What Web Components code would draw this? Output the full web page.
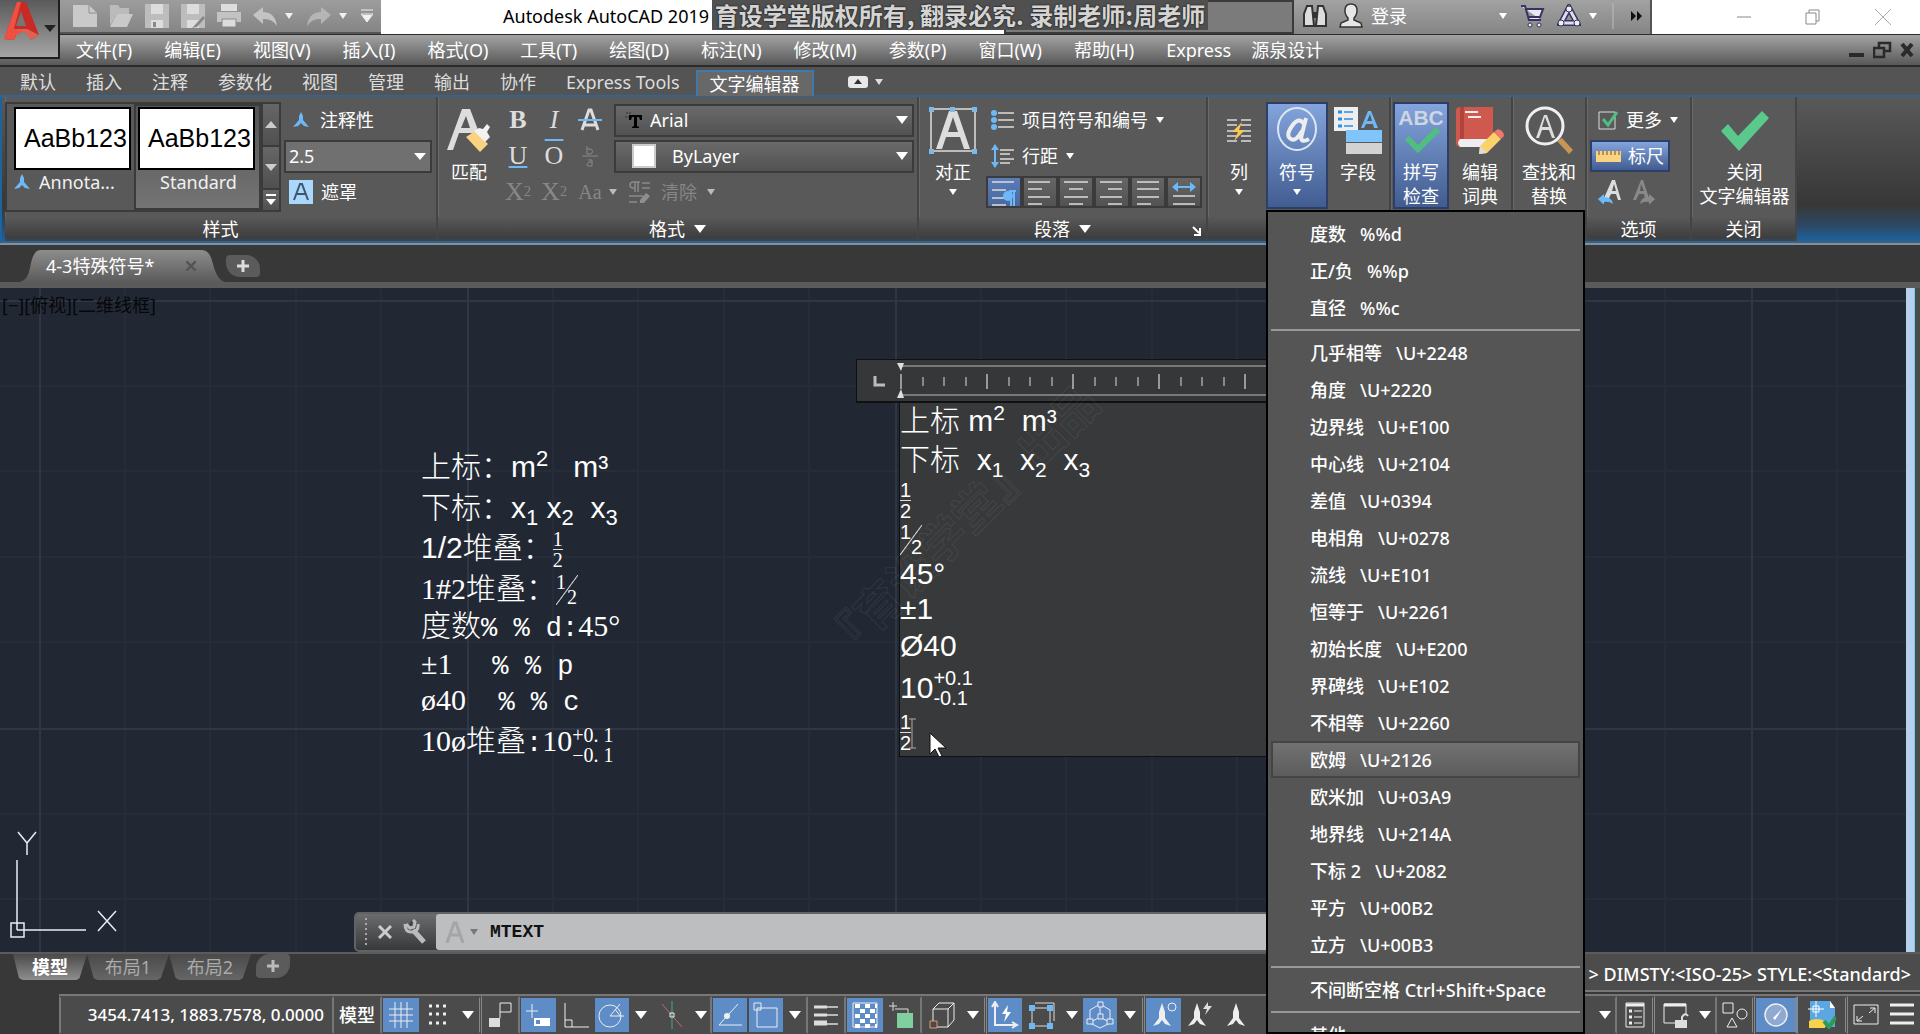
<!DOCTYPE html>
<html lang="zh-CN">
<head>
<meta charset="utf-8">
<title>Autodesk AutoCAD 2019</title>
<style>
  html, body { margin: 0; }
  body {
    position: relative;
    display: flex;
    flex-direction: column;
    min-height: 100vh;
    overflow: hidden;
    background: #383838;
    color: #fff;
    font: 18px/24px "Noto Sans", "Noto Sans CJK SC", sans-serif;
  }
</style>
</head>
<body>
<title-bar></title-bar>
<menu-bar></menu-bar>
<cad-ribbon></cad-ribbon>
<file-tabs></file-tabs>
<drawing-canvas></drawing-canvas>
<layout-tabs></layout-tabs>
<status-bar></status-bar>
<symbol-menu></symbol-menu>

<script>
const base = `
  :host, *, *::before, *::after { box-sizing: border-box; }
  button, select, input { margin: 0; padding: 0; border: 0; background: none; color: inherit; font: inherit; }
  button { display: flex; align-items: center; justify-content: center; flex: none; white-space: nowrap; }
  select { appearance: none; }
  svg { display: block; flex: none; }
`;

const svg = (w, h, body) => `<svg width="${w}" height="${h}" viewBox="0 0 ${w} ${h}" fill="none" aria-hidden="true">${body}</svg>`;
const caret = svg(8, 6, '<path d="M0 0h8l-4 6z" fill="currentColor"/>');
const bigCaret = svg(12, 8, '<path d="M0 0h12l-6 8z" fill="currentColor"/>');
const personA = (c) => svg(16, 16, `<path d="M8 0l2 4v4l6 7-5-1-3-3-3 3-5 1 6-7V4z" fill="${c}"/>`);

const lines = (list, c = '#ddd') => list.map(([x, y, w]) => `<path d="M${x} ${y}h${w}" stroke="${c}" stroke-width="1.5"/>`).join('');

class CadElement extends HTMLElement {
  constructor() {
    super();
    this.shadowDOM = this.attachShadow({mode: 'open'});
  }

  connectedCallback() {
    this.render();
  }

  show(style, markup) {
    this.shadowDOM.innerHTML = `<style>${base}${style}</style>${markup}`;
  }
}

class TitleBar extends CadElement {
  render() {
    const g = '#c9c9c9';
    const tools = [
      ['新建', svg(24, 24, `<path d="M0 1h16l8 8v14H0z" fill="${g}"/><path d="M16 1v8h8" stroke="#909090"/>`)],
      ['打开', svg(24, 24, `<path d="M1 22V1h8l2 3h9v6H8z" fill="#bbb"/><path d="M8 10h16l-6 13H1z" fill="${g}"/>`)],
      ['保存', svg(24, 24, `<path d="M0 0h24v24H0z" fill="#bdbdbd"/><path d="M6 0h12v10H6zM6 16h12v8H6z" fill="#ddd"/><path d="M8 18h3v5H8z" fill="#888"/>`)],
      ['另存为', svg(24, 24, `<path d="M0 0h24v24H0z" fill="#bdbdbd"/><path d="M6 0h12v10H6zM6 16h12v8H6z" fill="#ddd"/><path d="M22 12l-9 10-2 2 5-1 8-9z" fill="#888"/>`)],
      ['打印', svg(24, 24, `<path d="M4 0h16v7H4z" fill="#ddd"/><path d="M0 8h24v10H0z" fill="#c3c3c3"/><path d="M5 15h14v8H5z" fill="#ddd" stroke="#888"/>`)],
      ['放弃', svg(24, 20, `<path d="M0 9L10 1v5q12 0 14 14-5-8-14-7v5z" fill="#c3c3c3"/>`)],
      ['重做', svg(24, 20, `<path d="M24 9L14 1v5Q2 6 0 20q5-8 14-7v5z" fill="#b5b5b5"/>`)]
    ];
    const btn = ([name, icon]) => `<button aria-label="${name}">${icon}</button>`;
    this.show(`
      :host { position: relative; display: flex; height: 34px; background: #fff; color: #000; }
      .app { position: absolute; left: 0; top: 0; z-index: 2; width: 60px; height: 59px; padding: 2px 0 0 4px; border: solid #1e1e1e; border-width: 0 2px 2px 0; background: linear-gradient(#5a5a5a, #a5a5a5); align-items: flex-start; justify-content: flex-start; gap: 4px; color: #222; }
      .app svg + svg { margin-top: 23px; }
      .quick { display: flex; align-items: center; gap: 12px; width: 381px; padding-left: 73px; background: linear-gradient(#9d9d9d, #858585); color: #f0f0f0; border-bottom: 2px solid #555; }
      .quick .drop { width: 8px; margin: 0 2px 0 -4px; }
      h1 { flex: 1; margin: 0; padding: 4px 0 0 122px; font-size: 18px; font-weight: 400; line-height: 24px; }
      .stamp { position: absolute; left: 712px; top: 0; width: 496px; height: 30px; background: #505050; color: #d4d4d4; font: bold 24px/30px "Noto Sans CJK SC", sans-serif; white-space: nowrap; text-align: center; text-shadow: 0 0 2px #000; }
      .search { width: 290px; border: 2px solid #3a3a3a; background: #7b7b7b; }
      .info { display: flex; align-items: center; width: 358px; padding: 0 9px 2px; border-right: 2px solid #555; background: linear-gradient(#a2a2a2, #858585); color: #fff; }
      .info button { gap: 8px; margin-right: 12px; }
      .window { display: flex; align-items: center; justify-content: space-between; width: 268px; padding: 0 29px 0 85px; }
    `, `
      <button class="app" aria-label="应用程序菜单">
        ${svg(36, 40, '<path d="M0 37L13 0h9l13 33-8 5-4-11-9 2-4 9z" fill="#c82a25"/><path d="M0 37L13 0h4L10 27l13 1-11 5-2 5z" fill="#ee5042"/><path d="M17 9l-5 15h10z" fill="#757575"/><path d="M10 27l13 0 12 6-8 5-6-8z" fill="#dd6253"/>')}
        ${svg(12, 8, '<path d="M0 0h12l-6 7z" fill="#222"/>')}
      </button>
      <div class="quick">
        ${tools.slice(0, 6).map(btn).join('')}
        <button class="drop" aria-label="放弃列表">${caret}</button>
        ${btn(tools[6])}
        <button class="drop" aria-label="重做列表">${caret}</button>
        <button aria-label="自定义">${svg(12, 14, '<path d="M0 1h12M0 5h12l-6 8z" stroke="#f0f0f0"/><path d="M1 6h10l-5 7z" fill="#f0f0f0"/>')}</button>
      </div>
      <h1>Autodesk AutoCAD 2019</h1>
      <div class="search"></div>
      <div class="info">
        <button aria-label="搜索">${svg(24, 24, '<path d="M4 2h5l2 20H1V10zM15 2h5l3 8v12H13z" fill="#ddd" stroke="#333" stroke-width="2"/><path d="M10 8h4v6h-4z" fill="#333"/>')}</button>
        <button>${svg(24, 26, '<path d="M12 1c8 0 7 10 3 14v2l7 3 1 4H1l1-4 7-3v-2C5 11 4 1 12 1z" fill="#e6e6e6" stroke="#333" stroke-width="1.5"/>')}登录</button>
        <button style="margin-left:80px" aria-label="登录菜单">${caret}</button>
        <button aria-label="应用商店">${svg(26, 26, '<path d="M2 3h4l4 14h12M7 6h17l-3 8H9" fill="#e8e8f5" stroke="#34345f" stroke-width="2"/><circle cx="11" cy="22" r="2" fill="#eee" stroke="#34345f"/><circle cx="20" cy="22" r="2" fill="#eee" stroke="#34345f"/>')}</button>
        <button aria-label="A360">${svg(24, 24, '<path d="M12 4L4 19h16z" stroke="#34345f" stroke-width="6"/><path d="M12 4L4 19h16z" stroke="#dde" stroke-width="3"/><circle cx="12" cy="5" r="3" fill="#eee" stroke="#34345f"/><circle cx="4" cy="19" r="3" fill="#eee" stroke="#34345f"/><circle cx="20" cy="19" r="3" fill="#eee" stroke="#34345f"/>')}${caret}</button>
        <button aria-label="更多">${svg(36, 28, '<path d="M4 1v26" stroke="#bbb"/><path d="M22 9l5 5-5 5zM28 9l5 5-5 5z" fill="#111"/>')}</button>
      </div>
      <div class="window">
        <button aria-label="最小化">${svg(14, 14, '<path d="M0 7h14" stroke="#888"/>')}</button>
        <button aria-label="还原">${svg(16, 16, '<path d="M1 4h10v11H1zM4 4V1h10v11h-3" stroke="#888"/>')}</button>
        <button aria-label="关闭">${svg(16, 16, '<path d="M0 0l16 16M16 0L0 16" stroke="#aaa"/>')}</button>
      </div>
      <div class="stamp">育设学堂版权所有, 翻录必究. 录制老师:周老师</div>
    `);
  }
}
customElements.define('title-bar', TitleBar);

class MenuBar extends CadElement {
  render() {
    const items = ['文件(F)', '编辑(E)', '视图(V)', '插入(I)', '格式(O)', '工具(T)', '绘图(D)', '标注(N)', '修改(M)', '参数(P)', '窗口(W)', '帮助(H)', 'Express', '源泉设计'];
    this.show(`
      :host { display: flex; align-items: center; justify-content: space-between; height: 33px; border: solid #2b2b2b; border-width: 1px 0 2px; padding: 0 6px 0 76px; background: linear-gradient(#a3a3a3, #585858); }
      nav, .doc { display: flex; gap: 32px; }
      nav button:last-child { margin-left: -12px; }
      .doc { gap: 8px; }
    `, `
      <nav>${items.map(i => `<button>${i}</button>`).join('')}</nav>
      <div class="doc">
        <button aria-label="最小化图形">${svg(16, 18, '<path d="M0 12h15v4H0z" fill="#2a2a2a"/>')}</button>
        <button aria-label="还原图形">${svg(19, 18, '<path d="M1 7h10v9H1zM6 6V2h11v8h-5" stroke="#2a2a2a" stroke-width="2.5"/>')}</button>
        <button aria-label="关闭图形">${svg(14, 16, '<path d="M2 2l10 12M12 2L2 14" stroke="#2a2a2a" stroke-width="4"/>')}</button>
      </div>
    `);
  }
}
customElements.define('menu-bar', MenuBar);

class RibbonPanel extends CadElement {
  render() {
    const drop = this.hasAttribute('drop') ? bigCaret : '';
    const launcher = this.hasAttribute('launcher')
      ? `<button class="launch" aria-label="段落对话框">${svg(9, 10, '<path d="M1 1l6 6M8 2v7H2" stroke="#fff" stroke-width="2"/>')}</button>` : '';
    this.show(`
      :host { display: flex; flex-direction: column; flex: none; border: solid #444; border-width: 0 2px 0 0; box-shadow: inset 1px 0 #6a6a6a; background: #595959; }
      .body { display: flex; height: 120px; padding: 5px 0 0 4px; }
      .foot { position: relative; display: flex; align-items: center; justify-content: center; gap: 9px; height: 24px; background: linear-gradient(#595959, #3e3e3e 85%, #2d4a68); }
      .launch { position: absolute; right: 5px; top: 9px; }
    `, `<div class="body"><slot></slot></div><div class="foot">${this.getAttribute('caption') || ''}${drop}${launcher}</div>`);
  }
}
customElements.define('ribbon-panel', RibbonPanel);

class CadRibbon extends CadElement {
  render() {
    const tabs = ['默认', '插入', '注释', '参数化', '视图', '管理', '输出', '协作', 'Express Tools'];
    const align = [
      lines([[0, 4, 22], [0, 12, 14], [0, 20, 14], [0, 27, 14]]) + '<path d="M17 13h7M19 13v15M22 13v15" stroke="#6db9f7" stroke-width="2"/><circle cx="16" cy="18" r="5" fill="#6db9f7"/>',
      lines([[0, 5, 22], [0, 12, 14], [0, 20, 22], [0, 27, 14]]),
      lines([[0, 5, 24], [5, 12, 14], [0, 20, 24], [5, 27, 14]]),
      lines([[0, 5, 22], [8, 12, 14], [0, 20, 22], [8, 27, 14]]),
      lines([[1, 5, 22], [1, 12, 22], [1, 20, 22], [1, 27, 14]]),
      '<path d="M0 10l6-5v4h12V5l6 5-6 5v-4H6v4z" fill="#6db9f7"/>' + lines([[1, 19, 22], [1, 27, 22]])
    ];
    this.show(`
      :host { display: block; border-bottom: 2px solid #7d91a5; background: #545454; }
      .tabs { display: flex; align-items: flex-start; height: 30px; padding: 3px 0 0 5px; border-bottom: 2px solid #35648f; color: #ddd; }
      .tabs button { padding: 0 15px; line-height: 25px; }
      .tabs .on { height: 26px; margin-left: 1px; padding: 0 12px; border: 2px solid #4178aa; border-bottom: 0; background: #686868; color: #fff; line-height: 20px; }
      .tabs .min { gap: 7px; height: 24px; padding: 0 34px; }
      .panels { display: flex; padding-left: 3px; border-bottom: 2px solid #3f5f7d; border-left: 2px solid #1d639c; background: linear-gradient(#595959, #373737 75%, #2d4a68 90%, #1c639f); }
      .gallery { display: flex; width: 276px; height: 110px; margin-left: -4px; border: 2px solid #3b3b3b; }
      .style { display: flex; flex-direction: column; align-items: stretch; justify-content: flex-start; width: 127px; padding: 3px 2px 0 7px; line-height: 24px; color: #f0f0f0; }
      .style b { display: block; width: 117px; height: 63px; padding-left: 8px; border: 2px solid #000; background: #fff; color: #000; font: 25px/58px "Liberation Sans", sans-serif; text-align: left; }
      .style span { display: flex; align-items: center; gap: 9px; }
      .style.on { border: 2px solid #3b3b3b; padding: 1px 0 0 2px; background: linear-gradient(#555, #747474); }
      .style.on span { justify-content: center; }
      .scroll { width: 20px; border-left: 2px solid #3b3b3b; }
      .scroll button { width: 100%; height: 43px; border-bottom: 2px solid #3b3b3b; background: linear-gradient(#666, #505050); }
      .scroll button:last-child { height: 20px; border: 0; }
      .opts { width: 148px; margin-left: 3px; }
      .row { display: flex; align-items: center; height: 36px; white-space: nowrap; }
      .row button { height: 32px; }
      .cell { width: 36px; font: 26px/32px "Liberation Serif", serif; color: #ddd; }
      .dim { color: #878787; }
      sup, sub { font-size: 14px; line-height: 0; }
      .opts button { gap: 8px; padding-left: 5px; }
      .opts .note { gap: 11px; padding-left: 9px; }
      .combo { position: relative; display: flex; align-items: center; gap: 10px; width: 100%; height: 33px; padding: 0 4px 0 3px; border: 2px solid #3b3b3b; background: #707070; }
      .combo select { flex: 1; min-width: 0; height: 28px; }
      .combo svg:last-child { pointer-events: none; }
      .font { flex: none; width: 300px; margin-left: 6px; padding-left: 8px; gap: 8px; background: linear-gradient(#6a6a6a, #525252); }
      .swatch { width: 24px; height: 24px; margin: 0 8px; border: 2px solid #ccc; background: #fff; }
      .big { flex-direction: column; justify-content: flex-start; width: 54px; height: 107px; padding-top: 4px; line-height: 24px; }
      .big > svg:first-child { margin-bottom: 6px; }
      .big svg + svg, .big span + svg { margin-top: 5px; }
      .on2 { border: 2px solid #2d3f66; padding-top: 2px; background: linear-gradient(#83a4dc, #415c90); }
      .gap8 { gap: 8px; }
      .al { width: 36px; border: 2px solid #3b3b3b; background: linear-gradient(#666, #525252); }
      .al.on2 { background: linear-gradient(#5a7cb8, #4a689e); }
    `, `
      <div class="tabs">
        ${tabs.map(t => `<button>${t}</button>`).join('')}
        <button class="on">文字编辑器</button>
        <button class="min" aria-label="最小化功能区">${svg(20, 12, '<rect width="20" height="12" rx="3" fill="#e8e8e8"/><path d="M6 8h8l-4-5z" fill="#333"/>')}${caret}</button>
      </div>
      <div class="panels">
        <ribbon-panel caption="样式" style="width:433px">
          <div class="gallery">
            <button class="style"><b>AaBb123</b><span>${personA('#6db9f7')}Annota...</span></button>
            <button class="style on"><b>AaBb123</b><span>Standard</span></button>
            <div class="scroll">
              <button aria-label="上一行">${svg(12, 8, '<path d="M0 7h12L6 0z" fill="#ccc"/>')}</button>
              <button aria-label="下一行">${svg(12, 8, '<path d="M0 0h12L6 7z" fill="#ccc"/>')}</button>
              <button aria-label="展开">${svg(12, 12, '<path d="M1 1h10" stroke="#fff" stroke-width="2"/><path d="M1 5h10l-5 6z" fill="#fff"/>')}</button>
            </div>
          </div>
          <div class="opts">
            <div class="row"><button class="note">${personA('#6db9f7')}注释性</button></div>
            <div class="row"><div class="combo"><select aria-label="文字高度"><option>2.5</option></select>${svg(12, 7, '<path d="M0 0h12l-6 7z" fill="#fff"/>')}</div></div>
            <div class="row"><button>${svg(24, 24, '<path d="M0 0h24v24H0z" fill="#a9d7fd"/><path d="M5 20l6-16h2l6 16M7 14h10" stroke="#405468" stroke-width="2"/>')}遮罩</button></div>
          </div>
        </ribbon-panel>

        <ribbon-panel caption="格式" drop style="width:481px">
          <button class="big">${svg(48, 48, '<path d="M2 44L17 3h8l13 34h-7l-4-10H14L8 44zM16 22h9L21 10z" fill="#ddd"/><path d="M21 31l9-6 13 13-8 8z" fill="#fbd281"/><path d="M29 25l5-3 4 1 4-5 3 3-3 5 3 5-5 5z" fill="#f2f2f2"/>')}匹配</button>
          <div style="margin-left:4px">
            <div class="row">
              <button class="cell"><strong>B</strong></button><button class="cell"><em>I</em></button>
              <button class="cell" aria-label="删除线">${svg(24, 24, '<path d="M4 22L11 2h2l7 20M7 17h10" stroke="#ddd" stroke-width="3"/><path d="M0 12h24" stroke="#6db9f7" stroke-width="2"/>')}</button>
              <div class="combo font">${svg(18, 20, '<path d="M2 3h5M1 7h5" stroke="#333" stroke-dasharray="2 1"/><path d="M5 5h13v5h-2l-1-3h-2v9l2 1v1H8v-1l2-1V7H8l-1 3H5z" fill="#000"/>')}<select aria-label="字体"><option>Arial</option></select>${bigCaret}</div>
            </div>
            <div class="row">
              <button class="cell" style="text-decoration:underline;text-decoration-color:#6db9f7">U</button>
              <button class="cell" style="text-decoration:overline;text-decoration-color:#6db9f7">O</button>
              <button class="cell dim" aria-label="堆叠">${svg(16, 22, '<path d="M5 1v8h3a2 2 0 0 0 0-5H5M10 21v-6H6M10 17H7q-4 4 0 4h3" stroke="#8a8a8a"/><path d="M0 11h16" stroke="#8a8a8a"/>')}</button>
              <div class="combo font"><i class="swatch"></i><select aria-label="颜色"><option>ByLayer</option></select>${bigCaret}</div>
            </div>
            <div class="row dim">
              <button class="cell dim">X<sup>2</sup></button><button class="cell dim">X<sub>2</sub></button>
              <button class="cell dim" style="font-size:20px">Aa</button><span style="color:#bbb;padding:0 12px 0 1px">${caret}</span>
              <button style="gap:10px;color:#868686">${svg(22, 24, '<path d="M6 2v10M9 2v10M11 2H4a3 3 0 0 0 0 6h2M13 3h8M13 8h8M0 16h14M0 22h8" stroke="#8a8a8a" stroke-width="1.5"/><path d="M11 20l6-7 4 3-6 7h-4z" fill="#8f8f8f"/>')}清除<span style="color:#bbb">${caret}</span></button>
            </div>
          </div>
        </ribbon-panel>

        <ribbon-panel caption="段落" drop launcher style="width:289px">
          <button class="big" style="width:60px">${svg(48, 48, '<path d="M2 3h44v42H2z" stroke="#ddd" stroke-width="1.5"/><path d="M7 43L20 5h8l13 38h-6l-4-12H17l-4 12zM19 26h10L24 11z" fill="#ddd"/><path d="M0 1h5v5H0zM21 1h5v5h-5zM43 1h5v5h-5zM0 43h5v5H0zM43 43h5v5h-5z" fill="#7fb9e6"/>')}对正${caret}</button>
          <div>
            <div class="row" style="padding-left:8px"><button class="gap8">${svg(23, 20, '<circle cx="3" cy="3" r="3" fill="#6db9f7"/><circle cx="3" cy="10" r="3" fill="#6db9f7"/><circle cx="3" cy="17" r="3" fill="#6db9f7"/>' + lines([[7, 3, 16], [7, 10, 16], [7, 17, 16]]))}项目符号和编号${caret}</button></div>
            <div class="row" style="padding-left:8px"><button class="gap8">${svg(23, 24, '<path d="M4 2v20" stroke="#6db9f7" stroke-width="2"/><path d="M0 6l4-6 4 6zM0 18l4 6 4-6z" fill="#6db9f7"/>' + lines([[9, 6, 14], [9, 10, 10], [9, 15, 14], [9, 19, 10]]))}行距${caret}</button></div>
            <div class="row" style="padding-left:3px">${align.map((a, i) => `<button class="al ${i ? '' : 'on2'}" aria-label="对齐 ${i + 1}">${svg(24, 30, a)}</button>`).join('')}</div>
          </div>
        </ribbon-panel>

        <ribbon-panel style="width:183px">
          <button class="big">${svg(24, 48, lines([[0, 14, 10], [0, 19, 10], [0, 25, 10], [0, 30, 10], [0, 35, 10], [14, 14, 10], [14, 19, 10], [14, 25, 10], [14, 30, 10], [14, 35, 10]]) + '<path d="M15 16L5 26h6l-4 9 11-11h-6z" fill="#fbc658"/>')}列${caret}</button>
          <button class="big on2" style="width:62px">${svg(48, 48, '<ellipse cx="24" cy="23" rx="19" ry="21" stroke="#dde6f5" stroke-width="2"/><path d="M33 12l-5 20q1 5 8 1" stroke="#eee" stroke-width="4"/><path d="M31 18q-5-8-12 2t-1 13q5 3 11-8" stroke="#eee" stroke-width="4"/>')}符号${caret}</button>
          <button class="big" style="width:60px">${svg(48, 48, '<path d="M0 1h24v24H0z" fill="#eee"/><path d="M4 6h4M4 13h4M4 20h4" stroke="#2b8fe0" stroke-width="3"/><path d="M10 6h9M10 13h9M10 20h9" stroke="#2b8fe0" stroke-width="1.5"/><path d="M27 22l7-17h3l7 17h-4l-1-4h-7l-2 4zM33 15h5l-2-7z" fill="#6db9f7"/><path d="M12 24h36v12H12z" fill="#7fc4fb"/><path d="M12 37h36v11H12z" fill="#d2d2d2"/>')}字段</button>
        </ribbon-panel>

        <ribbon-panel style="width:122px">
          <button class="big on2" style="margin-left:-2px;width:56px">${svg(52, 48, '<text x="26" y="19" fill="#cfd5e2" text-anchor="middle" font-family="Liberation Sans" font-weight="700" font-size="21">ABC</text><path d="M12 32l11 11 20-20" stroke="#50bd81" stroke-width="6"/>')}拼写<span>检查</span></button>
          <button class="big" style="margin-left:4px">${svg(48, 48, '<path d="M4 1h33v36H4q-4 5 0 5-4-2-4-5V5q0-4 4-4z" fill="#cf594f"/><path d="M6 1v32" stroke="#b3443c" stroke-width="4"/><path d="M4 33h33v8H4q-4-4 0-8z" fill="#eee"/><path d="M9 6h13M12 11h13" stroke="#eee" stroke-width="2"/><path d="M24 40l14-14 7 7-14 14-8 1z" fill="#fbd26a"/><path d="M38 26l4-3q6 2 6 7l-3 3z" fill="#f0796b"/><path d="M24 40l7 7-8 1z" fill="#ddd"/>')}编辑<span>词典</span></button>
        </ribbon-panel>

        <ribbon-panel style="width:74px">
          <button class="big" style="width:64px">${svg(48, 48, '<path d="M32 35l5-3 11 12-4 4z" fill="#c89556"/><circle cx="20" cy="20" r="18" stroke="#f0f0f0" stroke-width="3"/><path d="M11 32l8-23h3l8 23h-3l-3-8h-7l-3 8zM17 21h7l-4-10z" fill="#ddd"/>')}查找和<span>替换</span></button>
        </ribbon-panel>

        <ribbon-panel caption="选项" style="width:105px">
          <div style="margin-left:-1px">
            <div class="row" style="padding-left:8px"><button class="gap8">${svg(20, 20, '<path d="M1 2h16v17H1z" stroke="#ddd"/><path d="M5 9l5 6 9-13" stroke="#50bd81" stroke-width="3"/>')}更多${caret}</button></div>
            <div class="row"><button class="on2" style="gap:7px;width:80px;padding:0">${svg(25, 12, '<path d="M0 1h25v11H0z" fill="#fbd281"/><path d="M3 1v4M7 1v4M11 1v4M15 1v4M19 1v4M23 1v4" stroke="#665532"/>')}标尺</button></div>
            <div class="row" style="padding-left:8px;gap:10px">
              <button aria-label="放弃">${svg(24, 24, '<path d="M6 18L14 0h3l6 20h-3l-2-6h-5l-3 6zM14 11h4l-2-7z" fill="#ddd"/><path d="M0 19l6-5v3q8 0 9 7-4-3-9-2v3z" fill="#6db9f7"/>')}</button>
              <button aria-label="重做">${svg(24, 24, '<path d="M1 20L9 0h2l6 18-4 2-1-6H7l-3 6zM8 11h4L9 4z" fill="#898989"/><path d="M23 19l-6-5v3q-8 0-9 7 4-3 9-2v3z" fill="#898989"/>')}</button>
            </div>
          </div>
        </ribbon-panel>

        <ribbon-panel caption="关闭" style="width:105px">
          <button class="big" style="width:95px;margin-left:1px">${svg(48, 48, '<path d="M0 25l7-7 10 12L41 5l7 7-30 33z" fill="#5bc98b"/>')}关闭<span>文字编辑器</span></button>
        </ribbon-panel>
      </div>
    `);
  }
}
customElements.define('cad-ribbon', CadRibbon);

class FileTabs extends CadElement {
  render() {
    this.show(`
      :host { display: flex; align-items: flex-end; height: 43px; padding-left: 20px; border-bottom: 6px solid #5b5b5b; background: #383838; }
      .tab { justify-content: flex-start; gap: 32px; width: 205px; height: 32px; padding-left: 26px; background: linear-gradient(#8d8d8d, #5b5b5b); clip-path: path("M0 32Q8 30 10 18Q13 0 20 0H182Q190 0 193 14Q197 30 205 32Z"); }
      .add { width: 34px; height: 22px; margin: 0 0 5px 1px; border-radius: 4px 14px 4px 14px; background: #5b5b5b; }
    `, `
      <button class="tab">4-3特殊符号*${svg(10, 10, '<path d="M0 0l10 10M10 0L0 10" stroke="#555" stroke-width="2.5"/>')}</button>
      <button class="add" aria-label="新图形">${svg(12, 12, '<path d="M6 0v12M0 6h12" stroke="#ddd" stroke-width="3"/>')}</button>
    `);
  }
}
customElements.define('file-tabs', FileTabs);

class CommandLine extends CadElement {
  render() {
    this.show(`
      :host { display: flex; height: 40px; border: 2px solid #606265; border-radius: 5px 0 0 5px; background: linear-gradient(#6a6c6e, #38393b); }
      .grip { display: flex; align-items: center; gap: 11px; width: 80px; padding-left: 9px; }
      .field { display: flex; align-items: center; flex: 1; gap: 6px; padding-left: 10px; border-radius: 3px 0 0 3px; background: #bdbec0; color: #777; }
      input { flex: 1; margin-left: 6px; color: #111; font: bold 18px/24px "Liberation Mono", monospace; outline: 0; }
    `, `
      <div class="grip">
        ${svg(2, 28, '<path d="M1 0v28" stroke="#aaa" stroke-width="2" stroke-dasharray="2 3"/>')}
        <button aria-label="关闭命令行">${svg(14, 14, '<path d="M1 1l12 12M13 1L1 13" stroke="#ccc" stroke-width="3"/>')}</button>
        <button aria-label="自定义命令行">${svg(24, 26, '<path d="M10 11l11 12" stroke="#bbb" stroke-width="5"/><path d="M9 2L7 7l5 2 3-4" stroke="#3d3e40" stroke-width="2"/><path d="M2 5q0 9 7 8 7-1 6-8M3 5l4 4 4-1 1-5-2-2" stroke="#bbb" stroke-width="3"/>')}</button>
      </div>
      <div class="field">
        ${svg(18, 22, '<path d="M1 22L8 2h2l7 20M4 14h10" stroke="#a4a5a7" stroke-width="3"/>')}${caret}
        <input aria-label="命令" value="MTEXT">
      </div>
    `);
  }
}
customElements.define('command-line', CommandLine);

// fraction styles shared by the notes and the text editor
const stacks = `
  .frac, .tol { display: inline-flex; flex-direction: column; font-size: 20px; line-height: 20px; vertical-align: middle; }
  .frac span + span { border-top: 1px solid #ddd; }
  .diag { display: inline-grid; grid-template: 15px 15px / 11px 11px; font-size: 20px; line-height: 15px; vertical-align: middle; background: linear-gradient(to bottom right, transparent calc(50% - 1px), #ddd, transparent calc(50% + 1px)); }
  .diag span + span { grid-area: 2 / 2; }
`;

class TextEditor extends CadElement {
  render() {
    const ticks = Array.from({length: 18}, (_, i) => i % 4
      ? `<path d="M${Math.round(44 + i * 21.5)} 17v9" stroke="#888" stroke-width="2"/>`
      : `<path d="M${44 + i * 21.5} 14v15" stroke="#999" stroke-width="2"/>`).join('');
    this.show(`
      :host { display: block; }
      ${stacks}
      .ruler { width: 411px; border: 1px solid #111; border-width: 1px 0 2px 1px; background: #363738; }
      .page { position: relative; display: grid; grid-template-rows: 34px 42px 42px 38px 30px 40px 34px 50px 38px 5px; align-items: center; margin-left: 43px; border: solid #111; border-width: 0 0 1px 1px; background: #38393a; font: 30px/30px "Liberation Sans", sans-serif; white-space: pre; }
      .cn { font-family: "Noto Sans CJK SC", sans-serif; font-weight: 300; }
      .row1 { align-self: start; }
      sup, sub { font-size: 21px; line-height: 0; }
      .flex { display: flex; }
      .caret { position: absolute; left: 9px; bottom: 7px; }
    `, `
      <div class="ruler">${svg(410, 41, `<path d="M18 16v9h10" stroke="#bbb" stroke-width="3"/><path d="M44 6h366M44 35h366" stroke="#bbb"/><path d="M40 3h7l-3 8zM40 38h7l-3-9z" fill="#ddd"/>${ticks}`)}</div>
      <div class="page">
        <div class="row1"><span class="cn">上标</span> m<sup>2</sup>  m³</div>
        <div><span class="cn">下标</span>  x<sub>1</sub>  x<sub>2</sub>  x<sub>3</sub></div>
        <div class="flex"><span class="frac"><span>1</span><span>2</span></span></div>
        <div class="flex"><span class="diag"><span>1</span><span>2</span></span></div>
        <div>45°</div>
        <div>±1</div>
        <div>Ø40</div>
        <div class="flex" style="align-items:center">10<span class="tol"><span>+0.1</span><span>-0.1</span></span></div>
        <div class="flex"><span class="frac"><span>1</span><span>2</span></span></div>
        <div class="caret">${svg(8, 31, '<path d="M0 1h7M3 1v29M0 30h7" stroke="#aaa"/>')}</div>
      </div>
    `);
  }
}
customElements.define('text-editor', TextEditor);

class DrawingCanvas extends CadElement {
  render() {
    this.show(`
      :host { position: relative; display: block; flex: 1; min-height: 600px; overflow: hidden; background: #222833; }
      ${stacks}
      .grid { position: absolute; inset: 0; }
      .view { position: absolute; left: 2px; top: 5px; color: #05070b; }
      .notes { position: absolute; left: 421px; top: 157px; display: grid; grid-template-rows: 40px 42px 44px 34px 42px 34px 38px 50px; align-items: center; font: 300 30px/30px "Noto Sans CJK SC", sans-serif; white-space: pre; }
      .a { font-family: "Liberation Sans", sans-serif; font-weight: 400; }
      .s { font-family: "Liberation Serif", serif; font-weight: 400; }
      .m { font-family: "Liberation Mono", monospace; font-size: 27px; font-weight: 400; }
      sup, sub { font-size: 22px; line-height: 0; }
      .ucs { position: absolute; left: 10px; bottom: 13px; }
      text-editor { position: absolute; left: 856px; top: 71px; }
      .water { position: absolute; left: 800px; top: 90px; }
      .cursor { position: absolute; left: 929px; top: 444px; }
      command-line { position: absolute; left: 354px; right: 335px; bottom: 0; }
      .scroll { position: absolute; right: 0; top: 0; bottom: 0; width: 14px; border: 0; border-right: 5px solid #4b4b48; background: linear-gradient(90deg, #b7d0ee 8px, #66d0ff 8px); }
    `, `
      <svg class="grid" width="100%" height="100%" aria-hidden="true">
        <defs><pattern id="g" width="428" height="428" x="39" y="12" patternUnits="userSpaceOnUse">
          <path d="M86 0v428M171 0v428M257 0v428M342 0v428M0 86h428M0 171h428M0 257h428M0 342h428" stroke="#262c38" stroke-width="2"/>
          <path d="M1 0v428M0 1h428" stroke="#303744" stroke-width="2"/>
        </pattern></defs>
        <rect width="100%" height="100%" fill="url(#g)"/>
      </svg>
      <div class="view">[−][俯视][二维线框]</div>
      <div class="notes">
        <div>上标：<span class="a">m<sup>2</sup>   m³</span></div>
        <div>下标：<span class="a">x<sub>1</sub> x<sub>2</sub>  x<sub>3</sub></span></div>
        <div><span class="a">1/2</span>堆叠：<span class="s frac"><span>1</span><span>2</span></span></div>
        <div><span class="s">1#2</span>堆叠：<span class="s diag"><span>1</span><span>2</span></span></div>
        <div>度数<span class="m">% % d:</span><span class="s">45°</span></div>
        <div><span class="s">±1 </span><span class="m">  % % p</span></div>
        <div><span class="s">ø40</span><span class="m">  % % c</span></div>
        <div><span class="s">10ø</span>堆叠<span class="m">:</span><span class="s">10<span class="tol"><span>+0. 1</span><span>−0. 1</span></span></span></div>
      </div>
      <div class="ucs">${svg(110, 108, '<path d="M2 1l9 11 9-11M11 12v12" stroke="#e8ecf5" stroke-width="1.5" transform="translate(6 0)"/><path d="M7 29v70M7 99h69M1 92h13v14H1zM88 80l18 20M106 80L88 100" stroke="#e8ecf5" stroke-width="1.5"/>')}</div>
      <text-editor></text-editor>
      <svg class="water" width="340" height="340" aria-hidden="true"><text x="42" y="288" transform="rotate(-45 42 288)" font-family="Noto Sans CJK SC" font-weight="700" font-size="46" fill="none" stroke="#fff" stroke-opacity=".08" stroke-width="1">『育设学堂』出品</text></svg>
      <div class="cursor">${svg(18, 26, '<path d="M1 1v21l5-5 4 8 3-1-4-8h8z" fill="#fff" stroke="#111"/>')}</div>
      <command-line></command-line>
      <div class="scroll"></div>
    `);
  }
}
customElements.define('drawing-canvas', DrawingCanvas);

class LayoutTabs extends CadElement {
  render() {
    this.show(`
      :host { display: flex; justify-content: space-between; align-items: flex-start; height: 42px; border-top: 2px solid #5b5b5b; }
      .tabs { display: flex; padding-left: 13px; }
      .tab { width: 82px; height: 26px; background: linear-gradient(#4a4a4a, #666); color: #aaa; line-height: 26px; clip-path: polygon(0 0, 100% 0, 90% 92%, 86% 100%, 13% 100%, 8% 92%); }
      .tab.on { width: 74px; background: linear-gradient(#4a4a4a, #8e8e8e); color: #fff; font-weight: 700; }
      .add { width: 34px; height: 24px; margin-left: 5px; border-radius: 14px 4px 14px 4px; background: #5b5b5b; }
      .dim { flex: none; width: 336px; height: 38px; padding-right: 9px; background: #4c4c4c; border-bottom: 2px solid #777; line-height: 40px; font-weight: 500; text-align: right; white-space: nowrap; }
    `, `
      <div class="tabs">
        <button class="tab on">模型</button><button class="tab">布局1</button><button class="tab">布局2</button>
        <button class="add" aria-label="新建布局">${svg(12, 12, '<path d="M6 0v12M0 6h12" stroke="#bbb" stroke-width="3"/>')}</button>
      </div>
      <div class="dim">&gt; DIMSTY:&lt;ISO-25&gt; STYLE:&lt;Standard&gt;</div>
    `);
  }
}
customElements.define('layout-tabs', LayoutTabs);

class StatusBar extends CadElement {
  render() {
    const w = '#eee';
    const A = (x, y) => `<path d="M${x} ${y}l3 9v6l6 8-6-2-3-4-3 4-6 2 6-8V${y + 9}z" fill="#eee"/>`;
    // [width, name, drawing, state]: state is "on" for lit, "sep" or "end" for a divider after it
    const left = [
      [38, '栅格', `<path d="M8 1v26M14 1v26M20 1v26M2 8h24M2 14h24M2 20h24" stroke="${w}"/>`, 'on'],
      [36, '捕捉模式', `<path d="M5 5h18M5 13h18M5 22h18" stroke="${w}" stroke-width="3" stroke-dasharray="3 4"/>`],
      [26, '', caret, 'end'],
      [38, '推断约束', `<path d="M3 17h11v9H3z" fill="#ddd"/><path d="M14 17V2h11v9H14" stroke="${w}"/>`, 'sep'],
      [37, '动态输入', `<path d="M7 3v14M1 10h12" stroke="${w}"/><path d="M9 17h16v8H9z" fill="#fff"/><path d="M11 19h4v4h-4z" fill="#5d8cc7"/>`, 'on'],
      [37, '正交', `<path d="M3 2v24h24M3 19h7v7" stroke="${w}"/>`],
      [36, '极轴追踪', `<circle cx="12" cy="15" r="11" stroke="${w}"/><path d="M26 15H12L22 3M17 8l5 7" stroke="${w}"/>`, 'on'],
      [22, '', caret],
      [40, '等轴测', '<path d="M4 3l20 23" stroke="#c66"/><path d="M14 0v28" stroke="#4a8"/><path d="M12 12h4v4h-4z" stroke="#eee"/>'],
      [20, '', caret, 'sep'],
      [36, '对象捕捉追踪', `<path d="M22 3L3 24h23" stroke="${w}"/><circle cx="11" cy="15" r="3" fill="${w}"/>`, 'on'],
      [36, '对象捕捉', `<path d="M5 7h20v19H5zM2 2h7v7H2z" stroke="${w}"/>`, 'on'],
      [24, '', caret, 'sep'],
      [38, '线宽', lines([[2, 6, 24], [2, 14, 24], [2, 23, 24]]) + '<path d="M2 6h13M2 14h13" stroke="#ddd" stroke-width="3"/><path d="M2 22h13" stroke="#ddd" stroke-width="5"/>', 'sep'],
      [38, '透明度', `<path d="M2 2h24v24H2z" stroke="${w}"/><path d="M4 5h22M4 15h22M4 25h22" stroke="#fff" stroke-width="4" stroke-dasharray="5 5"/><path d="M9 10h17M9 20h17" stroke="#fff" stroke-width="4" stroke-dasharray="5 5"/>`, 'on'],
      [38, '选择循环', '<path d="M5 1v9M1 5h8M7 8h13v4" stroke="#ddd"/><path d="M9 12h16v15H9z" fill="#7fcf9f"/>', 'sep'],
      [39, '三维对象捕捉', `<path d="M5 8h15v18H5zM5 8l6-6h15v17l-6 7M20 8l6-6" stroke="${w}"/><path d="M2 20h7v7H2z" fill="#4a4a4a" stroke="#e09a70"/>`],
      [26, '', caret, 'end'],
      [36, '动态UCS', `<path d="M4 2v22h22M1 6l3-5 3 5M21 21l5 3-5 3" stroke="${w}" stroke-width="2"/><path d="M17 4l-6 9h4l-2 8 7-10h-4z" fill="#fff"/>`, 'on'],
      [38, '选择过滤', '<path d="M4 7h18v18H4zM7 2h19v18" stroke="#ddd"/><path d="M1 4h6v6H1zM19 4h6v6h-6zM1 22h6v6H1zM19 22h6v6h-6z" fill="#6db9f7"/>'],
      [21, '', caret],
      [36, '小控件', `<path d="M14 3l10 6v13l-10 5-10-5V9zM14 3v12M5 21l9-5 9 5" stroke="${w}"/><path d="M12 1h5v5h-5zM1 18h6v5H1zM21 18h6v5h-6zM12 13h5v5h-5z" fill="#5d8cc7" stroke="${w}"/>`, 'on'],
      [27, '', caret, 'end'],
      [37, '注释可见性', A(12, 2) + `<circle cx="22" cy="6" r="4" stroke="${w}"/>`, 'on'],
      [36, '自动缩放', A(11, 2) + '<path d="M22 1l-5 7h4l-2 6 7-9h-4z" fill="#ddd"/>'],
      [36, '注释比例', A(14, 2)]
    ];
    const right = [
      [22, '', caret, 'sep'],
      [38, '快捷特性', `<path d="M5 2h18v24H5z" stroke="${w}"/><path d="M5 4h18" stroke="${w}" stroke-width="3"/><path d="M8 10h3M8 16h3M8 22h3" stroke="${w}" stroke-width="3"/><path d="M13 10h8M13 16h8M13 22h8" stroke="${w}"/>`, 'end'],
      [40, '锁定用户界面', `<path d="M14 22H3V3h22v10" stroke="${w}"/><path d="M3 4h22" stroke="${w}" stroke-width="3"/><path d="M14 19h12v8H14z" fill="#ddd"/><path d="M21 19v-3q3-5 6-1" stroke="#ddd" stroke-width="2"/>`],
      [22, '', caret, 'sep'],
      [38, '隔离对象', `<path d="M2 2h10v10H2zM11 17l5 9H6z" stroke="${w}"/><circle cx="21" cy="13" r="5" stroke="${w}"/>`, 'end'],
      [43, '硬件加速', `<circle cx="14" cy="14" r="11" fill="#8faad0" stroke="${w}" stroke-width="1.5"/><path d="M20 8l-7 11-2-2z" fill="#fff"/>`, 'on end'],
      [50, '图形', '<path d="M2 0h20l5 7v19H2z" fill="#5aa7e2"/><path d="M22 0v7h5z" fill="#fff"/><path d="M0 8h16M8 0v16M5 5h6v6H5z" stroke="#fff"/><path d="M1 20q8-4 16 0v7H1z" fill="#f7d34a"/><path d="M16 20l5 6 7-10" stroke="#2d9a55" stroke-width="4"/>', 'end'],
      [36, '全屏', `<path d="M2 4h24v19H2zM5 20l6-5M17 12l6-5M5 15v5h5M18 7h5v5" stroke="${w}"/>`],
      [36, '自定义', `<path d="M2 4h24M2 13h24M2 22h24" stroke="${w}" stroke-width="3"/>`]
    ];
    const cell = ([width, name, art, state]) => `<button class="${state || ''}" style="width:${width}px" aria-label="${name || '列表'}">${name ? svg(28, 28, art) : bigCaret}</button>`;
    this.show(`
      :host { display: flex; justify-content: space-between; height: 40px; padding-left: 59px; overflow: hidden; }
      div { display: flex; flex: none; border-top: 2px solid #777; background: #4b4b4b; }
      .left { flex: 1; }
      button { height: 38px; border-top: 2px solid #4b4b4b; border-bottom: 2px solid #4b4b4b; }
      .coords { width: 275px; justify-content: flex-end; padding: 0 8px; border-left: 2px solid #777; border-right: 2px solid #777; font-size: 17px; font-weight: 500; }
      .model { width: 48px; border-right: 2px solid #777; font-weight: 500; }
      .on { background: #5d8cc7; border-left: 1px solid #4b4b4b; border-right: 1px solid #4b4b4b; }
      .sep { border-right: 2px solid #777; }
      .end { border-right: 3px double #888; }
    `, `
      <div class="left">
        <button class="coords">3454.7413, 1883.7578, 0.0000</button>
        <button class="model">模型</button>
        ${left.map(cell).join('')}
      </div>
      <div>${right.map(cell).join('')}</div>
    `);
  }
}
customElements.define('status-bar', StatusBar);

class SymbolMenu extends CadElement {
  render() {
    const groups = [
      ['度数   %%d', '正/负   %%p', '直径   %%c'],
      ['几乎相等   \\U+2248', '角度   \\U+2220', '边界线   \\U+E100', '中心线   \\U+2104', '差值   \\U+0394', '电相角   \\U+0278', '流线   \\U+E101', '恒等于   \\U+2261', '初始长度   \\U+E200', '界碑线   \\U+E102', '不相等   \\U+2260', '欧姆   \\U+2126', '欧米加   \\U+03A9', '地界线   \\U+214A', '下标 2   \\U+2082', '平方   \\U+00B2', '立方   \\U+00B3'],
      ['不间断空格 Ctrl+Shift+Space'],
      ['其他...']
    ];
    const item = (t) => `<button role="menuitem" class="${t.startsWith('欧姆') ? 'on' : ''}">${t}</button>`;
    this.show(`
      :host { position: absolute; left: 1266px; top: 210px; bottom: 0; z-index: 5; width: 319px; padding: 3px 3px 0; border: 2px solid #000; background: #555; overflow: hidden; }
      button { justify-content: flex-start; width: 100%; height: 37px; padding-left: 39px; font-weight: 500; white-space: pre; }
      .on { border: 2px solid #444; padding-left: 37px; background: linear-gradient(#717173, #5c5c5c); }
      hr { height: 2px; margin: 3px 0; border: 0; background: #999; }
    `, groups.map(g => g.map(item).join('')).join('<hr>'));
  }
}
customElements.define('symbol-menu', SymbolMenu);
</script>
</body>
</html>
